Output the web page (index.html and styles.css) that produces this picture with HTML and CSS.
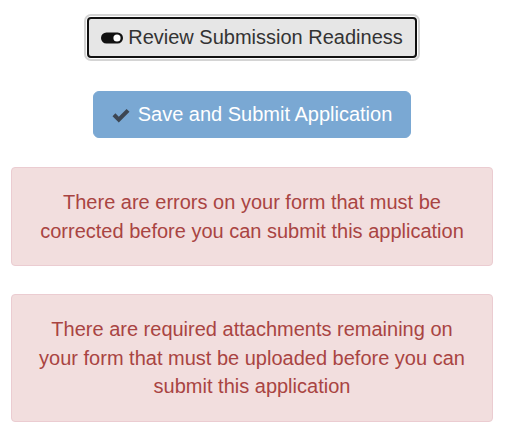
FILE: index.html
```html
<!DOCTYPE html>
<html>
<head>
<meta charset="utf-8">
<link rel="stylesheet" href="styles.css">
</head>
<body>
<div class="page">
  <div class="actions">
    <button class="btn btn-review" type="button">
      <svg class="ico-toggle" width="22" height="12" viewBox="0 0 22 12" aria-hidden="true">
        <rect x="0" y="0.5" width="22" height="11" rx="5.5" fill="#111"/>
        <circle cx="16" cy="6" r="3.6" fill="#fff"/>
      </svg>
      <span>Review Submission Readiness</span>
    </button>
    <button class="btn btn-submit" type="button" disabled>
      <svg class="ico-ok" width="18" height="15" viewBox="0 0 18 15" aria-hidden="true">
        <path d="M0.5 8.2 L3.4 5.3 L6.8 8.7 L14.6 0.9 L17.5 3.8 L6.8 14.5 Z" fill="#3d4652"/>
      </svg>
      <span>Save and Submit Application</span>
    </button>
  </div>
  <div class="alert">There are errors on your form that must be corrected before you can submit this application</div>
  <div class="alert">There are required attachments remaining on your form that must be uploaded before you can submit this application</div>
</div>
</body>
</html>
```
FILE: styles.css
```css
html, body {
  margin: 0;
  padding: 0;
  background: #fff;
}
body {
  font-family: "Liberation Sans", Arial, sans-serif;
  color: #333;
}
.page {
  padding: 17px 18px 0 11px;
  display: flex;
  flex-direction: column;
  align-items: stretch;
}
.actions {
  display: flex;
  flex-direction: column;
  align-items: center;
  gap: 33px;
  margin-bottom: 29px;
}
.btn {
  font-family: "Liberation Sans", Arial, sans-serif;
  font-size: 20px;
  display: inline-flex;
  align-items: center;
  justify-content: center;
  cursor: pointer;
  border-radius: 4px;
}
.btn-review {
  height: 41px;
  padding: 0 12px;
  gap: 5px;
  background: #e6e6e6;
  color: #333;
  border: 2px solid #111;
  box-shadow: 0 0 0 1px #fff, 0 0 0 3px #d4d4d4;
}
.btn-submit {
  height: 47px;
  padding: 0 18px;
  gap: 8px;
  background: #7aa8d3;
  color: #fff;
  border: 1px solid #7aa8d3;
  border-radius: 6px;
}
.ico-ok {
  margin-top: 1px;
}
.alert {
  background: #f2dede;
  border: 1px solid #ebccd1;
  color: #a94442;
  border-radius: 4px;
  padding: 20px 25px;
  font-size: 20px;
  line-height: 1.42857;
  text-align: center;
  margin-bottom: 28px;
}
```
